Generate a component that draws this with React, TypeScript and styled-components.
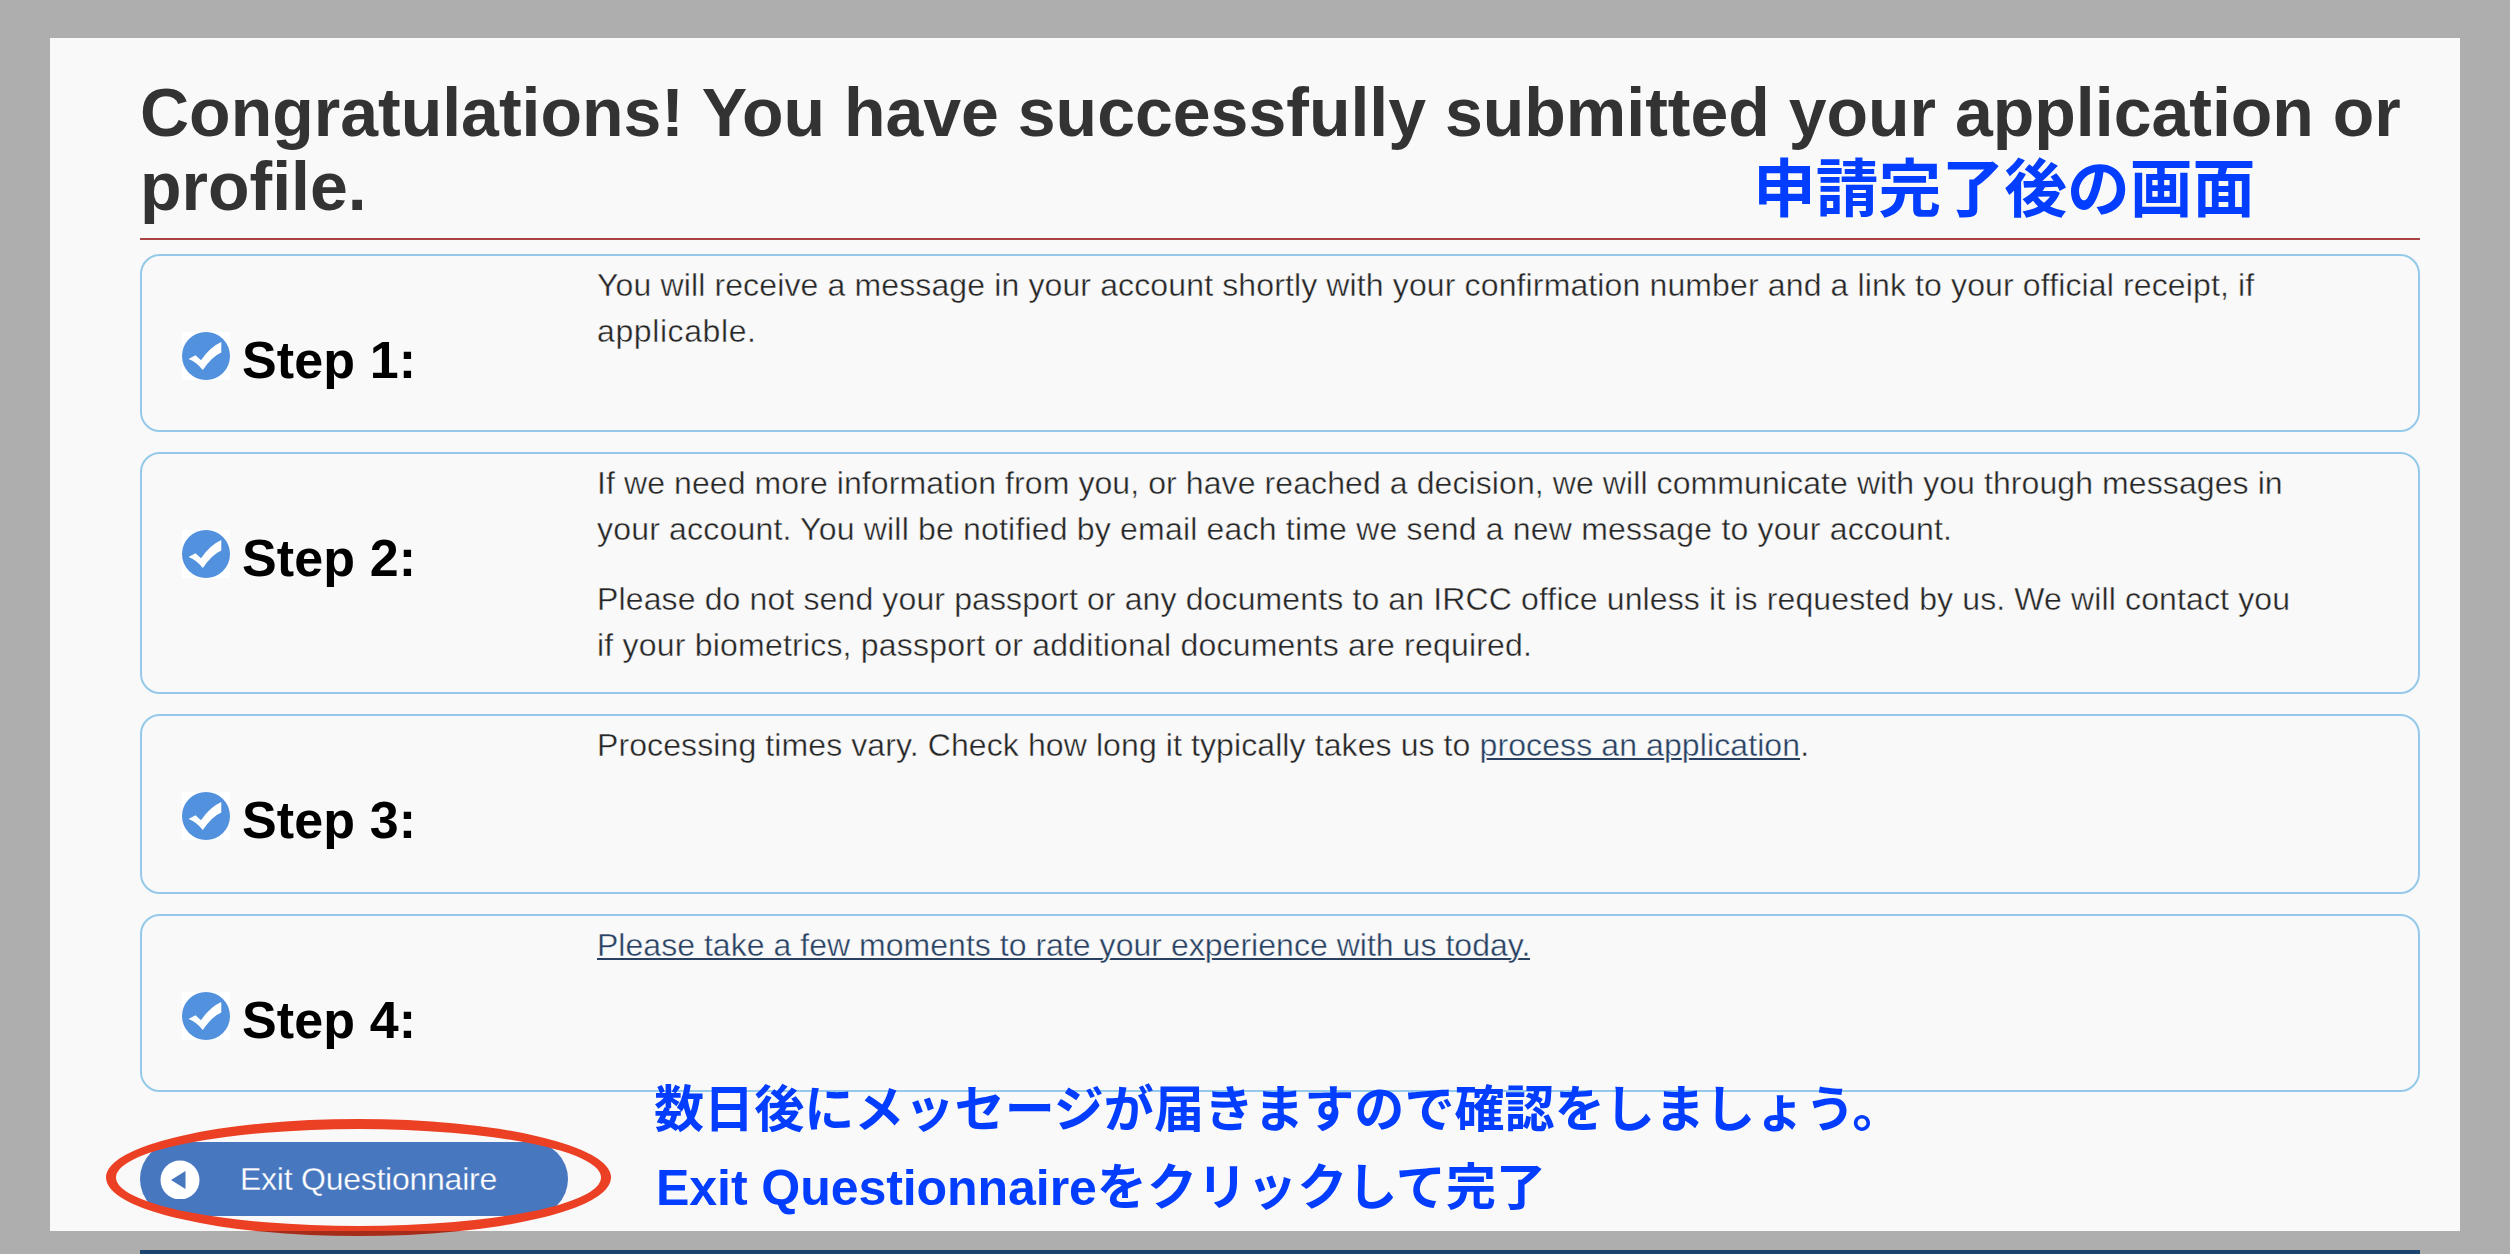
import type { ReactNode } from "react";
import styled, { createGlobalStyle } from "styled-components";

const GlobalStyle = createGlobalStyle`
  * {
    box-sizing: border-box;
  }

  body {
    margin: 0;
    background: #f9f9f9;
    font-family: "Liberation Sans", Arial, sans-serif;
    color: #333;
  }
`;

const Page = styled.main`
  position: relative;
  height: 1254px;
  padding: 75px 90px 0 140px;
  overflow: hidden;
  display: flex;
  flex-direction: column;
`;

const Title = styled.h1`
  margin: 0 0 14px;
  padding-bottom: 15px;
  border-bottom: 2px solid #a94346;
  font-size: 68px;
  line-height: 74px;
  white-space: nowrap;
`;

const Steps = styled.div`
  display: flex;
  flex-direction: column;
  gap: 20px;
`;

const Card = styled.section<{ $height: number }>`
  display: flex;
  align-items: flex-start;
  height: ${(p) => p.$height}px;
  padding: 6px 0 0 40px;
  border: 2px solid #95c9e9;
  border-radius: 20px;
`;

const Label = styled.h2`
  display: flex;
  align-items: flex-start;
  gap: 12px;
  width: 415px;
  margin: 0;
  padding-top: 70px;
  font-size: 52px;
  line-height: 56px;
  letter-spacing: 0.1px;
  color: #000;
  white-space: nowrap;
`;

const CheckIcon = styled.svg`
  width: 48px;
  height: 48px;
  background: #fff;
`;

// The surface-coloured stroke thins the glyphs to a light weight.
const Body = styled.div`
  display: flex;
  flex-direction: column;
  gap: 24px;
  color: #262626;
  -webkit-text-stroke: 0.4px #f9f9f9;
`;

const Paragraph = styled.p`
  margin: 0;
  font-size: 32px;
  line-height: 46px;
`;

const Line = styled.span<{ $track?: number }>`
  display: block;
  letter-spacing: ${(p) => p.$track ?? 0}px;
  white-space: nowrap;
`;

const Link = styled.a`
  color: #284162;
  background: linear-gradient(#284162, #284162) 0 31px / 100% 2px no-repeat;
  text-shadow: 2px 0 #f9f9f9, -2px 0 #f9f9f9;
`;

const ExitButton = styled.button`
  display: flex;
  flex-shrink: 0;
  align-items: center;
  gap: 40px;
  width: 428px;
  height: 74px;
  margin-top: 50px;
  padding: 0 0 0 20px;
  border: 0;
  border-radius: 37px;
  background: #4777bf;
  color: #fff;
  font-family: inherit;
  font-size: 32px;
  letter-spacing: -0.25px;
  white-space: nowrap;
  -webkit-text-stroke: 0.3px #4777bf;
`;

const FooterBar = styled.div`
  flex-shrink: 0;
  height: 10px;
  margin-top: 34px;
  background: #28609d;
`;

const Note = styled.div<{ $x: number; $y: number; $size: number }>`
  position: absolute;
  left: ${(p) => p.$x}px;
  top: ${(p) => p.$y}px;
  font-family: "Liberation Sans", "Noto Sans CJK JP", sans-serif;
  font-size: ${(p) => p.$size}px;
  font-weight: 700;
  line-height: 78px;
  color: #033dff;
  white-space: nowrap;
`;

const Latin = styled.span`
  padding-left: 2px;
  letter-spacing: -0.1px;
`;

const Ring = styled.div`
  position: absolute;
  left: 106px;
  top: 1119px;
  width: 505px;
  height: 117px;
  border: 10px solid #ec4025;
  border-radius: 50%;
`;

const Shade = styled.div`
  position: absolute;
  inset: 0;
  border: solid rgba(0, 0, 0, 0.3);
  border-width: 38px 50px 23px;
  pointer-events: none;
`;

function Check() {
  return (
    <CheckIcon viewBox="0 0 48 48">
      <circle cx="24" cy="24" r="24" fill="#5291de" />
      <path
        d="M6.5 27 L13.5 23.2 L19 28.2 Q28 15 39.3 10 V20.5 Q30 24.5 20.8 38 Q14.5 30 6.5 27Z"
        fill="#fff"
      />
    </CheckIcon>
  );
}

function Step({ n, height = 178, children }: { n: number; height?: number; children: ReactNode }) {
  return (
    <Card $height={height}>
      <Label>
        <Check />
        Step {n}:
      </Label>
      <Body>{children}</Body>
    </Card>
  );
}

export default function App() {
  return (
    <Page>
      <GlobalStyle />
      <Title>
        <Line>Congratulations! You have successfully submitted your application or</Line>
        <Line>profile.</Line>
      </Title>
      <Steps>
        <Step n={1}>
          <Paragraph>
            <Line $track={0.13}>
              You will receive a message in your account shortly with your confirmation number and a link to your official receipt, if
            </Line>
            <Line $track={0.6}>applicable.</Line>
          </Paragraph>
        </Step>
        <Step n={2} height={242}>
          <Paragraph>
            <Line $track={0.09}>
              If we need more information from you, or have reached a decision, we will communicate with you through messages in
            </Line>
            <Line $track={0.19}>
              your account. You will be notified by email each time we send a new message to your account.
            </Line>
          </Paragraph>
          <Paragraph>
            <Line $track={0.13}>
              Please do not send your passport or any documents to an IRCC office unless it is requested by us. We will contact you
            </Line>
            <Line $track={0.21}>if your biometrics, passport or additional documents are required.</Line>
          </Paragraph>
        </Step>
        <Step n={3} height={180}>
          <Paragraph>
            <Line $track={0.1}>
              Processing times vary. Check how long it typically takes us to <Link>process an application</Link>.
            </Line>
          </Paragraph>
        </Step>
        <Step n={4}>
          <Paragraph>
            <Line $track={0.03}>
              <Link>Please take a few moments to rate your experience with us today.</Link>
            </Line>
          </Paragraph>
        </Step>
      </Steps>
      <ExitButton>
        <svg width="40" height="40" viewBox="0 0 40 40">
          <circle cx="20" cy="21" r="19.5" fill="#fff" />
          <path d="M11 21 L25.5 12 V30Z" fill="#4777bf" />
        </svg>
        Exit Questionnaire
      </ExitButton>
      <FooterBar />
      <Note $x={1753} $y={150} $size={62.8}>
        申請完了後の画面
      </Note>
      <Note $x={654} $y={1071} $size={50.1}>
        数日後にメッセージが届きますので確認をしましょう。
        <br />
        <Latin>Exit Questionnaire</Latin>をクリックして完了
      </Note>
      <Ring />
      <Shade />
    </Page>
  );
}
